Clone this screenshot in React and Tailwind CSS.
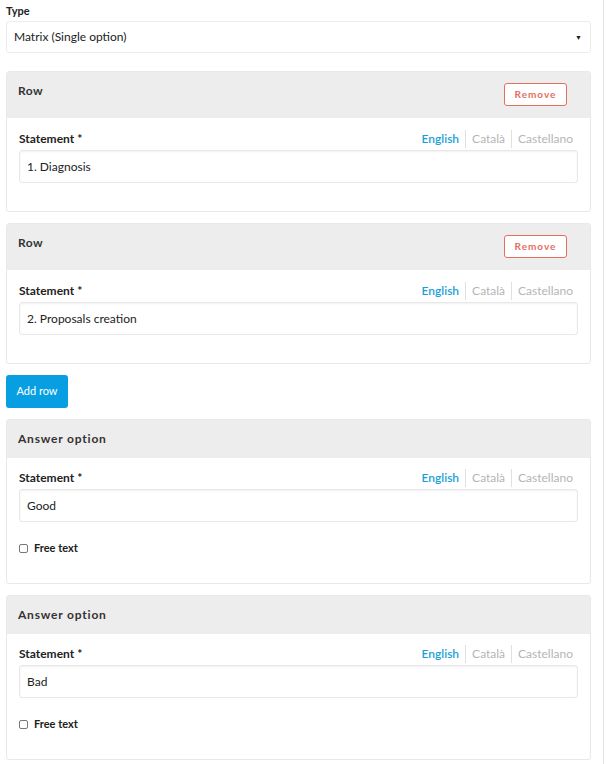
const F = { fontFamily: "Lato, 'Open Sans', sans-serif" };

function Langs() {
  return (
    <div className="flex items-center text-[12px] pr-[5px]">
      <span className="text-[#1a9fd9] font-semibold pr-[6px]">English</span>
      <span className="text-[#b5b5b5] border-l border-[#e0e0e0] px-[6px]">Català</span>
      <span className="text-[#b5b5b5] border-l border-[#e0e0e0] pl-[6px]">Castellano</span>
    </div>
  );
}

function Statement({ value }) {
  return (
    <div>
      <div className="flex justify-between items-end mb-[2px]">
        <span className="text-[12px] font-bold text-[#222]">Statement *</span>
        <Langs />
      </div>
      <div className="h-[33px] border border-[#e8e8e8] rounded-[3px] shadow-[inset_0_1px_2px_rgba(0,0,0,0.06)] flex items-center px-[7px] text-[12px] text-[#222]">{value}</div>
    </div>
  );
}

function Row({ value }) {
  return (
    <div className="border border-[#e8e8e8] rounded-[3px] bg-white h-[141px]">
      <div className="bg-[#ededed] h-[46px] flex justify-between items-start px-[11px] pt-[10px]">
        <span className="text-[12px] font-bold tracking-[0.5px] text-[#333]">Row</span>
        <span className="mt-[1px] mr-[12px] border border-[#e26e5e] rounded-[3px] w-[63px] h-[23px] flex items-center justify-center text-[10px] font-bold tracking-[1px] text-[#e26e5e] bg-white">Remove</span>
      </div>
      <div className="px-[12px] pt-[12px]"><Statement value={value} /></div>
    </div>
  );
}

function Answer({ value }) {
  return (
    <div className="border border-[#e8e8e8] rounded-[3px] bg-white h-[165px]">
      <div className="bg-[#ededed] h-[38px] flex items-center px-[11px]">
        <span className="text-[12px] font-bold tracking-[0.8px] text-[#333]">Answer option</span>
      </div>
      <div className="px-[12px] pt-[11px]">
        <Statement value={value} />
        <div className="flex items-center gap-[6px] mt-[18px]">
          <span className="w-[9px] h-[9px] border border-[#777] rounded-[2px]" />
          <span className="text-[11px] font-bold text-[#222]">Free text</span>
        </div>
      </div>
    </div>
  );
}

export default function App() {
  return (
    <div style={F} className="w-[609px] h-[764px] bg-white overflow-hidden flex">
      <div className="w-[604px] border-r border-[#e5e5e5] pl-[6px] pr-[12px]">
        <div className="text-[11px] font-bold text-[#222] pt-[3px] h-[21px]">Type</div>
        <div className="h-[32px] border border-[#ececec] rounded-[3px] flex items-center justify-between pl-[7px] pr-[8px] text-[12px] text-[#222]">
          <span>Matrix (Single option)</span>
          <span className="text-[7px]">▼</span>
        </div>
        <div className="mt-[18px] flex flex-col gap-[11px]">
          <Row value="1. Diagnosis" />
          <Row value="2. Proposals creation" />
          <div className="bg-[#089fe2] text-white text-[11px] w-[62px] h-[33px] rounded-[3px] flex items-center justify-center">Add row</div>
          <Answer value="Good" />
          <Answer value="Bad" />
        </div>
      </div>
    </div>
  );
}
